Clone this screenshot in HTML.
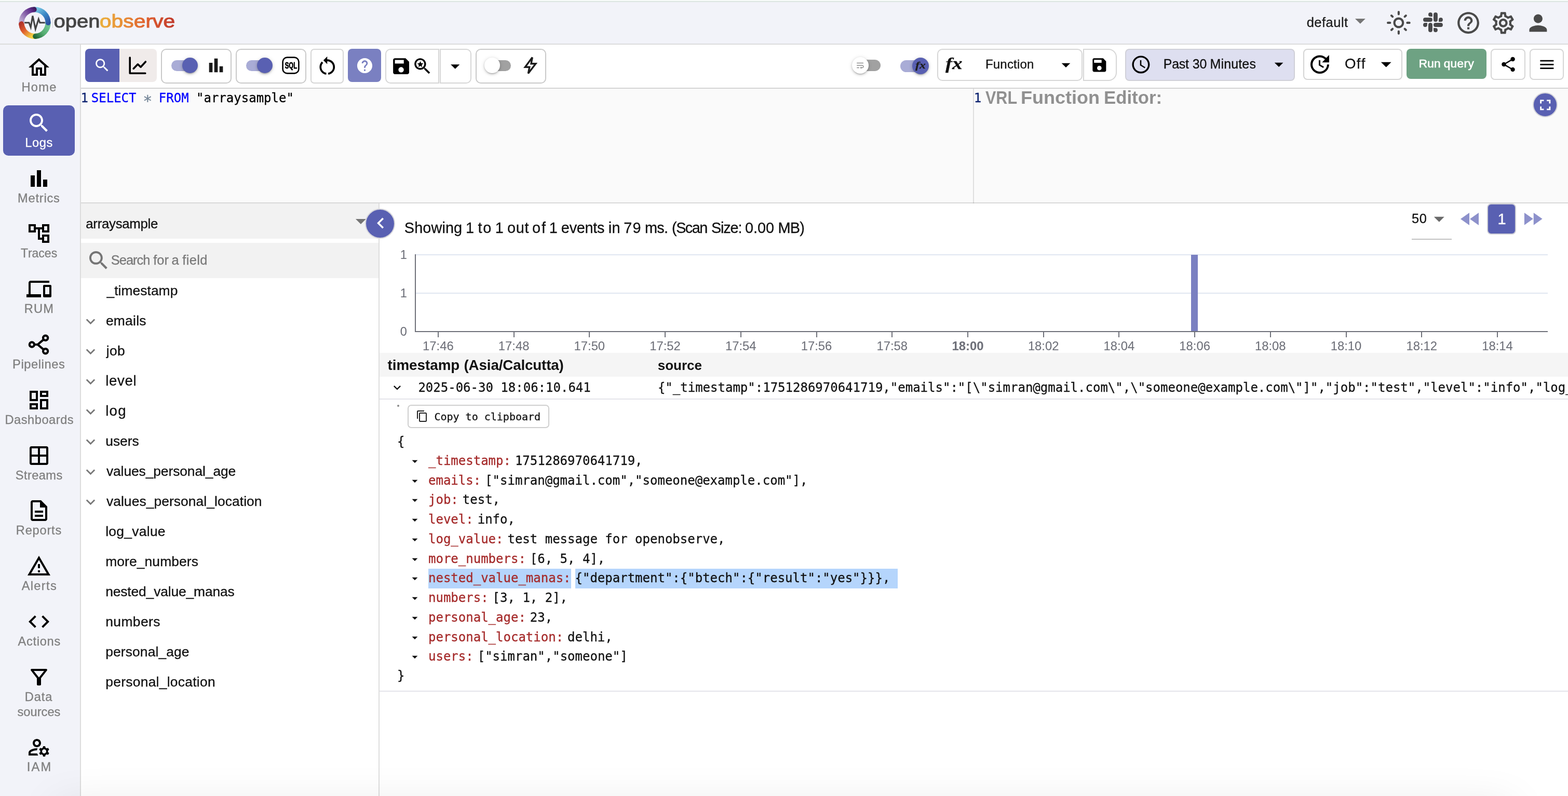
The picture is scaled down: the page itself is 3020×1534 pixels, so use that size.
<!DOCTYPE html>
<html lang="en"><head><meta charset="utf-8"><title>OpenObserve - Logs</title>
<style>
*{box-sizing:border-box;margin:0;padding:0}
html{overflow:hidden;background:#fff}
body{position:relative;width:3020px;height:1534px;overflow:hidden;background:#fff;font-family:"Liberation Sans",sans-serif;font-kerning:none;-webkit-font-smoothing:antialiased}
div,span,svg,header,nav,main,section,aside,button,ul,li{position:absolute;display:block}
button{border:0;background:none;font:inherit}
.t{white-space:pre;line-height:60px;height:60px;-webkit-text-stroke:.3px}
.sans{font-family:"Liberation Sans",sans-serif}
.sansb{font-family:"Liberation Sans",sans-serif;font-weight:bold;-webkit-text-stroke:0}
.mono{font-family:"DejaVu Sans Mono","Liberation Mono",monospace}
.serifbi{font-family:"Liberation Serif",serif;font-weight:bold;font-style:italic}
.i{overflow:visible}
.bd{border:2px solid #c9c9c9;border-radius:10px;background:#fff}
#app{left:0;top:0;width:3020px;height:1534px;overflow:hidden;transform-origin:0 0}
@supports (transform:scale(calc(100vw / 3020px))){body{width:100vw;height:calc(100vw * 1534 / 3020)}#app{transform:scale(calc(100vw / 3020px))}}
#app>*{will-change:transform}
</style></head>
<body>
<div id="app">
<header style="left:0;top:0;width:3020px;height:86px;background:#f2f3f9;border-bottom:2px solid #dcdcdc">
<div style="left:0px;top:0px;width:3020px;height:2px;background:#f8fcfa"></div>
<div style="left:0px;top:2px;width:3020px;height:2px;background:#dbe5e1"></div>
<svg class="i" style="left:33px;top:10px;width:68px;height:68px" viewBox="0 0 68 68">
<defs>
<linearGradient id="lgp" gradientUnits="userSpaceOnUse" x1="7" y1="31" x2="35" y2="8"><stop offset="0" stop-color="#bfafd5"/><stop offset=".45" stop-color="#8560a8"/><stop offset=".8" stop-color="#5f2d8a"/><stop offset="1" stop-color="#3d1a5c"/></linearGradient>
<linearGradient id="lgb" gradientUnits="userSpaceOnUse" x1="37" y1="9" x2="60" y2="36"><stop offset="0" stop-color="#74c4e2"/><stop offset=".5" stop-color="#3a86c4"/><stop offset="1" stop-color="#2a50a0"/></linearGradient>
<linearGradient id="lgg" gradientUnits="userSpaceOnUse" x1="58" y1="38" x2="34" y2="61"><stop offset="0" stop-color="#70c491"/><stop offset=".5" stop-color="#55ad72"/><stop offset="1" stop-color="#1f6537"/></linearGradient>
<linearGradient id="lgr" gradientUnits="userSpaceOnUse" x1="33" y1="61" x2="8" y2="35"><stop offset="0" stop-color="#f5d843"/><stop offset=".15" stop-color="#f0c840"/><stop offset=".6" stop-color="#e0602f"/><stop offset="1" stop-color="#b3352a"/></linearGradient>
</defs>
<g fill="none" stroke-width="10.2" stroke-linecap="round">
<path d="M37 59.6A25.8 25.8 0 0 1 8.3 36.2" stroke="url(#lgr)"/>
<path d="M59.5 33.4A25.8 25.8 0 0 1 35.2 59.9" stroke="url(#lgg)"/>
<path d="M34.5 8.3A25.8 25.8 0 0 1 59.6 33.6" stroke="url(#lgb)"/>
<path d="M8.3 33A25.8 25.8 0 0 1 32.6 8.3" stroke="url(#lgp)"/>
<path d="M12 47A25.8 25.8 0 0 1 8.3 36.2" stroke="url(#lgr)"/>
</g>
<path d="M14.1 33.8h8.8l3.3 8.8l3.7-22l5.4 25.3l6-19l2.5 6.9h9.9" fill="none" stroke="#424242" stroke-width="3.1" stroke-linejoin="miter"/>
</svg>

<div style="left:100.6px;top:34px;width:1.2px;height:20px;background:#d0d0d4"></div>
<svg class="i" style="left:100px;top:16px;width:244px;height:56px" viewBox="100 16 244 56"><defs><linearGradient id="lgt" gradientUnits="userSpaceOnUse" x1="193" y1="0" x2="336" y2="0"><stop offset="0" stop-color="#ebb03d"/><stop offset=".3" stop-color="#e88f35"/><stop offset=".62" stop-color="#df5f2e"/><stop offset="1" stop-color="#c0392b"/></linearGradient></defs><text x="103.42" y="53.1" font-family="Liberation Sans,sans-serif" font-size="35" textLength="88.98" lengthAdjust="spacingAndGlyphs" fill="#454545" stroke="#454545" stroke-width="1.0" stroke-linejoin="round">open</text><text x="191.88" y="53.1" font-family="Liberation Sans,sans-serif" font-size="35" textLength="145.33" lengthAdjust="spacingAndGlyphs" fill="url(#lgt)" stroke="url(#lgt)" stroke-width="1.0" stroke-linejoin="round">observe</text></svg>
<span class="t sans" style="left:2516.63px;top:13px;font-size:25.5px;color:#1c1c1c;letter-spacing:0.499px;">default</span>
<svg class="i" style="left:2596.02px;top:16.12px;width:47.76px;height:47.76px;" viewBox="0 0 24 24" preserveAspectRatio="none"><path fill="#757575" d="M7 10l5 5 5-5z"/></svg>
<svg class="i" style="left:2669.33px;top:19.33px;width:49.75px;height:49.75px;" viewBox="0 0 24 24" preserveAspectRatio="none"><path fill="#4a4a4a" d="M12 9c1.65 0 3 1.35 3 3s-1.35 3-3 3-3-1.35-3-3 1.35-3 3-3m0-2c-2.76 0-5 2.24-5 5s2.24 5 5 5 5-2.24 5-5-2.24-5-5-5zM2 13h2c.55 0 1-.45 1-1s-.45-1-1-1H2c-.55 0-1 .45-1 1s.45 1 1 1zm18 0h2c.55 0 1-.45 1-1s-.45-1-1-1h-2c-.55 0-1 .45-1 1s.45 1 1 1zM11 2v2c0 .55.45 1 1 1s1-.45 1-1V2c0-.55-.45-1-1-1s-1 .45-1 1zm0 18v2c0 .55.45 1 1 1s1-.45 1-1v-2c0-.55-.45-1-1-1s-1 .45-1 1zM5.99 4.58c-.39-.39-1.03-.39-1.41 0-.39.39-.39 1.03 0 1.41l1.06 1.06c.39.39 1.03.39 1.41 0s.39-1.03 0-1.41L5.99 4.58zm12.37 12.37c-.39-.39-1.03-.39-1.41 0-.39.39-.39 1.03 0 1.41l1.06 1.06c.39.39 1.03.39 1.41 0 .39-.39.39-1.03 0-1.41l-1.06-1.06zm1.06-10.96c.39-.39.39-1.03 0-1.41-.39-.39-1.03-.39-1.41 0l-1.06 1.06c-.39.39-.39 1.03 0 1.41s1.03.39 1.41 0l1.06-1.06zM7.05 18.36c.39-.39.39-1.03 0-1.41-.39-.39-1.03-.39-1.41 0l-1.06 1.06c-.39.39-.39 1.03 0 1.41s1.03.39 1.41 0l1.06-1.06z"/></svg>
<svg class="i" style="left:2741.1px;top:24px;width:38px;height:38px" viewBox="0 0 38 38"><g fill="#48484a"><path d="M13.95 0A3.95 3.95 0 1 0 13.95 7.9H17.9V3.95A3.95 3.95 0 0 0 13.95 0z"/><rect x="20" y="0" width="7.9" height="17.9" rx="3.95"/><rect x="0" y="10" width="17.9" height="7.9" rx="3.95"/><path d="M33.95 10A3.95 3.95 0 1 1 33.95 17.9H30V13.95A3.95 3.95 0 0 1 33.95 10z"/><path d="M3.95 27.9A3.95 3.95 0 1 1 3.95 20H7.9V23.95A3.95 3.95 0 0 1 3.95 27.9z"/><rect x="10" y="20" width="7.9" height="17.9" rx="3.95"/><rect x="20" y="20" width="17.9" height="7.9" rx="3.95"/><path d="M23.95 37.9A3.95 3.95 0 1 0 23.95 30H20V33.95A3.95 3.95 0 0 0 23.95 37.9z"/></g></svg>
<svg class="i" style="left:2802.85px;top:19.10px;width:50.10px;height:50.10px;" viewBox="0 0 24 24" preserveAspectRatio="none"><path fill="#4a4a4a" d="M11 18h2v-2h-2v2zm1-16C6.48 2 2 6.48 2 12s4.48 10 10 10 10-4.48 10-10S17.52 2 12 2zm0 18c-4.41 0-8-3.59-8-8s3.59-8 8-8 8 3.59 8 8-3.59 8-8 8zm0-14c-2.21 0-4 1.79-4 4h2c0-1.1.9-2 2-2s2 .9 2 2c0 2-3 1.75-3 5h2c0-2.25 3-2.5 3-5 0-2.21-1.79-4-4-4z"/></svg>
<svg class="i" style="left:2869.66px;top:18.75px;width:50.49px;height:50.49px;" viewBox="0 0 24 24" preserveAspectRatio="none"><path fill="#4a4a4a" d="M19.43 12.98c.04-.32.07-.64.07-.98 0-.34-.03-.66-.07-.98l2.11-1.65c.19-.15.24-.42.12-.64l-2-3.46c-.09-.16-.26-.25-.44-.25-.06 0-.12.01-.17.03l-2.49 1c-.52-.4-1.08-.73-1.69-.98l-.38-2.65C14.46 2.18 14.25 2 14 2h-4c-.25 0-.46.18-.49.42l-.38 2.65c-.61.25-1.17.59-1.69.98l-2.49-1c-.06-.02-.12-.03-.18-.03-.17 0-.34.09-.43.25l-2 3.46c-.13.22-.07.49.12.64l2.11 1.65c-.04.32-.07.65-.07.98 0 .33.03.66.07.98l-2.11 1.65c-.19.15-.24.42-.12.64l2 3.46c.09.16.26.25.44.25.06 0 .12-.01.17-.03l2.49-1c.52.4 1.08.73 1.69.98l.38 2.65c.03.24.24.42.49.42h4c.25 0 .46-.18.49-.42l.38-2.65c.61-.25 1.17-.59 1.69-.98l2.49 1c.06.02.12.03.18.03.17 0 .34-.09.43-.25l2-3.46c.12-.22.07-.49-.12-.64l-2.11-1.65zm-1.98-1.71c.04.31.05.52.05.73 0 .21-.02.43-.05.73l-.14 1.13.89.7 1.08.84-.7 1.21-1.27-.51-1.04-.42-.9.68c-.43.32-.84.56-1.25.73l-1.06.43-.16 1.13-.2 1.35h-1.4l-.19-1.35-.16-1.13-1.06-.43c-.43-.18-.83-.41-1.23-.71l-.91-.7-1.06.43-1.27.51-.7-1.21 1.08-.84.89-.7-.14-1.13c-.03-.31-.05-.54-.05-.74s.02-.43.05-.73l.14-1.13-.89-.7-1.08-.84.7-1.21 1.27.51 1.04.42.9-.68c.43-.32.84-.56 1.25-.73l1.06-.43.16-1.13.2-1.35h1.39l.19 1.35.16 1.13 1.06.43c.43.18.83.41 1.23.71l.91.7 1.06-.43 1.27-.51.7 1.21-1.07.85-.89.7.14 1.13zM12 8c-2.21 0-4 1.79-4 4s1.79 4 4 4 4-1.79 4-4-1.79-4-4-4zm0 6c-1.1 0-2-.9-2-2s.9-2 2-2 2 .9 2 2-.9 2-2 2z"/></svg>
<svg class="i" style="left:2937.17px;top:18.68px;width:50.85px;height:50.85px;" viewBox="0 0 24 24" preserveAspectRatio="none"><path fill="#4a4a4a" d="M12 12c2.21 0 4-1.79 4-4s-1.79-4-4-4-4 1.79-4 4 1.79 4 4 4zm0 2c-2.67 0-8 1.34-8 4v2h16v-2c0-2.66-5.33-4-8-4z"/></svg>
</header>
<nav style="left:0;top:86px;width:156px;height:1448px;background:#f2f3f9;border-right:2px solid #dcdcdc">
<svg class="i" style="left:51.00px;top:19.90px;width:48.00px;height:48.00px" viewBox="0 0 24 24"><path fill="#000" d="M12 5.69l5 4.5V18h-2v-6H9v6H7v-7.81l5-4.5M12 3L2 12h3v8h6v-6h2v6h6v-8h3L12 3z"/></svg>
<span class="t sans" style="left:41.46px;top:52px;font-size:23.64px;color:#7f7f7f;letter-spacing:1.277px;">Home</span>
<div style="left:6px;top:117px;width:138px;height:97px;background:#5960b2;border-radius:10px"></div>
<svg class="i" style="left:51.00px;top:126.70px;width:48.00px;height:48.00px" viewBox="0 0 24 24"><path fill="#fff" d="M15.5 14h-.79l-.28-.27C15.41 12.59 16 11.11 16 9.5 16 5.91 13.09 3 9.5 3S3 5.91 3 9.5 5.91 16 9.5 16c1.61 0 3.09-.59 4.23-1.57l.27.28v.79l5 4.99L20.49 19l-4.99-5zm-6 0C7.01 14 5 11.99 5 9.5S7.01 5 9.5 5 14 7.01 14 9.5 11.99 14 9.5 14z"/></svg>
<span class="t sans" style="left:48.16px;top:159px;font-size:23.64px;color:#fff;letter-spacing:0.677px;">Logs</span>
<svg class="i" style="left:51.00px;top:233.50px;width:48.00px;height:48.00px" viewBox="0 0 24 24"><path fill="#000" d="M4 9h4v11H4zm12 4h4v7h-4zm-6-9h4v16h-4z"/></svg>
<span class="t sans" style="left:34.06px;top:266px;font-size:23.64px;color:#7f7f7f;letter-spacing:0.770px;">Metrics</span>
<svg class="i" style="left:51.00px;top:340.30px;width:48.00px;height:48.00px" viewBox="0 0 24 24"><path fill="#000" d="M22 11V3h-7v3H9V3H2v8h7V8h2v10h4v3h7v-8h-7v3h-2V8h2v3h7zM7 9H4V5h3v4zm10 6h3v4h-3v-4zm0-10h3v4h-3V5z"/></svg>
<span class="t sans" style="left:39.88px;top:372px;font-size:22.99px;color:#7f7f7f;">Traces</span>
<svg class="i" style="left:51.00px;top:447.10px;width:48.00px;height:48.00px" viewBox="0 0 24 24"><path fill="#000" d="M4 6h18V4H4c-1.1 0-2 .9-2 2v11H0v3h14v-3H4V6zm19 2h-6c-.55 0-1 .45-1 1v10c0 .55.45 1 1 1h6c.55 0 1-.45 1-1V9c0-.55-.45-1-1-1zm-1 9h-4v-7h4v7z"/></svg>
<span class="t sans" style="left:46.76px;top:479px;font-size:23.64px;color:#7f7f7f;letter-spacing:1.171px;">RUM</span>
<svg class="i" style="left:51.00px;top:553.90px;width:48.00px;height:48.00px" viewBox="0 0 24 24"><g fill="none" stroke="#000" stroke-width="2.1"><circle cx="5.2" cy="12" r="2.3"/><circle cx="18.3" cy="5.6" r="2.3"/><circle cx="18.3" cy="18.4" r="2.3"/><path d="M7.5 12h3.3M16.5 7.2l-5.7 4.8 5.7 4.8" stroke-linejoin="miter"/></g></svg>
<span class="t sans" style="left:24.06px;top:586px;font-size:23.64px;color:#7f7f7f;letter-spacing:0.607px;">Pipelines</span>
<svg class="i" style="left:51.00px;top:660.70px;width:48.00px;height:48.00px" viewBox="0 0 24 24"><path fill="#000" d="M19 5v2h-4V5h4M9 5v6H5V5h4m10 8v6h-4v-6h4M9 17v2H5v-2h4M21 3h-8v6h8V3zM11 3H3v10h8V3zm10 8h-8v10h8V11zm-10 4H3v6h8v-6z"/></svg>
<span class="t sans" style="left:9.46px;top:693px;font-size:23.64px;color:#7f7f7f;letter-spacing:0.536px;">Dashboards</span>
<svg class="i" style="left:51.00px;top:767.50px;width:48.00px;height:48.00px" viewBox="0 0 24 24"><path fill="#000" d="M5 3h14a2 2 0 0 1 2 2v14a2 2 0 0 1-2 2H5a2 2 0 0 1-2-2V5a2 2 0 0 1 2-2zM11 19v-6H5v6h6zM11 11V5H5v6h6zM19 19v-6h-6v6h6zM19 11V5h-6v6h6z"/></svg>
<span class="t sans" style="left:29.73px;top:800px;font-size:23.64px;color:#7f7f7f;letter-spacing:0.419px;">Streams</span>
<svg class="i" style="left:51.00px;top:874.30px;width:48.00px;height:48.00px" viewBox="0 0 24 24"><path fill="#000" d="M8 16h8v2H8zm0-4h8v2H8zm6-10H6c-1.1 0-2 .9-2 2v16c0 1.1.89 2 1.99 2H18c1.1 0 2-.9 2-2V8l-6-6zm4 18H6V4h7v5h5v11z"/></svg>
<span class="t sans" style="left:30.86px;top:906px;font-size:23.64px;color:#7f7f7f;letter-spacing:0.770px;">Reports</span>
<svg class="i" style="left:51.00px;top:981.10px;width:48.00px;height:48.00px" viewBox="0 0 24 24"><path fill="#000" d="M12 5.99L19.53 19H4.47L12 5.99M12 2L1 21h22L12 2zm1 14h-2v2h2v-2zm0-6h-2v4h2v-4z"/></svg>
<span class="t sans" style="left:41.65px;top:1013px;font-size:23.64px;color:#7f7f7f;letter-spacing:1.355px;">Alerts</span>
<svg class="i" style="left:51.00px;top:1087.90px;width:48.00px;height:48.00px" viewBox="0 0 24 24"><path fill="#000" d="M9.4 16.6L4.8 12l4.6-4.6L8 6l-6 6 6 6 1.4-1.4zm5.2 0l4.6-4.6-4.6-4.6L16 6l6 6-6 6-1.4-1.4z"/></svg>
<span class="t sans" style="left:34.55px;top:1120px;font-size:23.64px;color:#7f7f7f;letter-spacing:0.696px;">Actions</span>
<svg class="i" style="left:51.00px;top:1194.70px;width:48.00px;height:48.00px" viewBox="0 0 24 24"><path fill="#000" d="M7 6h10l-5.01 6.3L7 6zm-2.75-.39C6.27 8.2 10 13 10 13v6c0 .55.45 1 1 1h2c.55 0 1-.45 1-1v-6s3.72-4.8 5.74-7.39c.51-.66.04-1.61-.79-1.61H5.04c-.83 0-1.3.95-.79 1.61z"/></svg>
<span class="t sans" style="left:47.86px;top:1227px;font-size:23.64px;color:#7f7f7f;letter-spacing:0.901px;">Data</span>
<span class="t sans" style="left:33.44px;top:1256px;font-size:23.64px;color:#7f7f7f;letter-spacing:0.040px;">sources</span>
<svg class="i" style="left:51.00px;top:1330.10px;width:48.00px;height:48.00px" viewBox="0 0 24 24"><path fill="#000" d="M4 18v-.65c0-.34.16-.66.41-.81C6.1 15.53 8.03 15 10 15c.03 0 .05 0 .08.01.1-.7.3-1.37.59-1.98-.22-.02-.44-.03-.67-.03-2.42 0-4.68.67-6.61 1.82-.88.52-1.39 1.5-1.39 2.53V20h9.26c-.42-.6-.75-1.28-.97-2H4zM10 12c2.21 0 4-1.79 4-4s-1.79-4-4-4-4 1.79-4 4 1.79 4 4 4zm0-6c1.1 0 2 .9 2 2s-.9 2-2 2-2-.9-2-2 .9-2 2-2zM20.75 16c0-.22-.03-.42-.06-.63l1.14-1.01-1-1.73-1.45.49c-.32-.27-.68-.48-1.08-.63L18 11h-2l-.3 1.49c-.4.15-.76.36-1.08.63l-1.45-.49-1 1.73 1.14 1.01c-.03.21-.06.41-.06.63s.03.42.06.63l-1.14 1.01 1 1.73 1.45-.49c.32.27.68.48 1.08.63L16 21h2l.3-1.49c.4-.15.76-.36 1.08-.63l1.45.49 1-1.73-1.14-1.01c.03-.21.06-.41.06-.63zM17 18c-1.1 0-2-.9-2-2s.9-2 2-2 2 .9 2 2-.9 2-2 2z"/></svg>
<span class="t sans" style="left:51.82px;top:1362px;font-size:23.64px;color:#7f7f7f;letter-spacing:2.196px;">IAM</span>
</nav>
<section style="left:156px;top:86px;width:2864px;height:85px;background:#fff;border-bottom:2px solid #d4d4d4">
<div style="left:8px;top:8px;width:66px;height:64px;background:#5960b2;border-radius:8px 0 0 8px"></div>
<svg class="i" style="left:24.37px;top:23.22px;width:33.28px;height:33.28px;" viewBox="0 0 24 24" preserveAspectRatio="none"><path fill="#fff" d="M15.5 14h-.79l-.28-.27C15.41 12.59 16 11.11 16 9.5 16 5.91 13.09 3 9.5 3S3 5.91 3 9.5 5.91 16 9.5 16c1.61 0 3.09-.59 4.23-1.57l.27.28v.79l5 4.99L20.49 19l-4.99-5zm-6 0C7.01 14 5 11.99 5 9.5S7.01 5 9.5 5 14 7.01 14 9.5 11.99 14 9.5 14z"/></svg>
<div style="left:74px;top:8px;width:72px;height:64px;background:#f0ebea;border-radius:0 8px 8px 0"></div>
<svg class="i" style="left:90px;top:20px;width:40px;height:40px" viewBox="0 0 40 40"><g fill="none" stroke="#000" stroke-width="3.6" stroke-linecap="round" stroke-linejoin="round"><path d="M4.2 5v30.3h29.6"/><path d="M11.2 26.2l8.2-8.4 5.6 5.4 9.4-10.2"/></g></svg>
<div class="bd" style="left:154px;top:8px;width:136px;height:67px;"></div>
<div style="left:174px;top:29.7px;width:48px;height:21px;background:#a9acd6;border-radius:10.5px"></div><div style="left:194.6px;top:25px;width:30.4px;height:30.4px;background:#5960b2;border-radius:50%;box-shadow:0 3px 2px -2px rgba(0,0,0,.2),0 2px 4px rgba(0,0,0,.18),0 1px 8px rgba(0,0,0,.12)"></div>
<svg class="i" style="left:239.87px;top:19.68px;width:40.05px;height:40.05px;" viewBox="0 0 24 24" preserveAspectRatio="none"><path fill="#1a1a1a" d="M4 9h4v11H4zm12 4h4v7h-4zm-6-9h4v16h-4z"/></svg>
<div class="bd" style="left:298px;top:8px;width:136px;height:67px;"></div>
<div style="left:318px;top:29.7px;width:48px;height:21px;background:#a9acd6;border-radius:10.5px"></div><div style="left:338.8px;top:25px;width:30.4px;height:30.4px;background:#5960b2;border-radius:50%;box-shadow:0 3px 2px -2px rgba(0,0,0,.2),0 2px 4px rgba(0,0,0,.18),0 1px 8px rgba(0,0,0,.12)"></div>
<svg class="i" style="left:385.5px;top:21.5px;width:36px;height:36px" viewBox="0 0 36 36"><rect x="2.6" y="2.6" width="30.8" height="30.8" rx="8.5" fill="none" stroke="#000" stroke-width="2.6"/><text x="6.7" y="24.2" style="font-family:'Liberation Sans',sans-serif;font-weight:700;font-size:16.2px;stroke:#000;stroke-width:.8px;stroke-linejoin:round" textLength="23.4" lengthAdjust="spacingAndGlyphs">SQL</text></svg>
<div class="bd" style="left:442px;top:8px;width:64px;height:67px;border-color:#d6d6d6;border-radius:7px"></div>
<svg class="i" style="left:451.72px;top:18.81px;width:44.56px;height:44.56px;" viewBox="0 0 24 24" preserveAspectRatio="none"><path fill="#000" d="M12 5V2L8 6l4 4V7c3.31 0 6 2.69 6 6 0 2.97-2.17 5.43-5 5.91v2.02c3.95-.49 7-3.85 7-7.93 0-4.42-3.58-8-8-8zm-6 8c0-1.65.67-3.15 1.76-4.24L6.34 7.34C4.9 8.79 4 10.79 4 13c0 4.08 3.05 7.44 7 7.93v-2.02c-2.83-.48-5-2.94-5-5.91z"/></svg>
<div style="left:514px;top:8px;width:64px;height:64px;background:#7a80c1;border-radius:8px"></div>
<svg class="i" style="left:528.66px;top:22.51px;width:34.98px;height:34.98px;" viewBox="0 0 24 24" preserveAspectRatio="none"><path fill="#fff" d="M12 2C6.48 2 2 6.48 2 12s4.48 10 10 10 10-4.48 10-10S17.52 2 12 2zm1 17h-2v-2h2v2zm2.07-7.75l-.9.92C13.45 12.9 13 13.5 13 15h-2v-.5c0-1.1.45-2.1 1.17-2.83l1.24-1.26c.37-.36.59-.86.59-1.41 0-1.1-.9-2-2-2s-2 .9-2 2H8c0-2.21 1.79-4 4-4s4 1.79 4 4c0 .88-.36 1.68-.93 2.25z"/></svg>
<div class="bd" style="left:586px;top:8px;width:103.5px;height:67px;border-color:#d6d6d6;border-radius:10px 0 0 10px"></div>
<div class="bd" style="left:690.5px;top:8px;width:61.5px;height:67px;border-color:#d6d6d6;border-radius:0 10px 10px 0"></div>
<svg class="i" style="left:595.93px;top:20.78px;width:41.13px;height:41.13px;" viewBox="0 0 24 24" preserveAspectRatio="none"><path fill="#000" d="M17 3H5c-1.11 0-2 .9-2 2v14c0 1.1.89 2 2 2h14c1.1 0 2-.9 2-2V7l-4-4zm-5 16c-1.66 0-3-1.34-3-3s1.34-3 3-3 3 1.34 3 3-1.34 3-3 3zm3-10H5V5h10v4z"/></svg>
<svg class="i" style="left:637.05px;top:20.60px;width:41.37px;height:41.37px;" viewBox="0 0 24 24" preserveAspectRatio="none"><path fill="#000" d="M15.5 14h-.79l-.28-.27C15.41 12.59 16 11.11 16 9.5 16 5.91 13.09 3 9.5 3S3 5.91 3 9.5 5.91 16 9.5 16c1.61 0 3.09-.59 4.23-1.57l.27.28v.79l5 4.99L20.49 19l-4.99-5zm-6 0C7.01 14 5 11.99 5 9.5S7.01 5 9.5 5 14 7.01 14 9.5 11.99 14 9.5 14z"/></svg>
<svg class="i" style="left:647.2px;top:31px;width:13px;height:13px" viewBox="0 0 24 24"><path d="M12 1.5l3.1 7.3 7.9.7-6 5.2 1.8 7.7-6.8-4.1-6.8 4.1 1.8-7.7-6-5.2 7.9-.7z"/></svg>
<svg class="i" style="left:700.35px;top:20.74px;width:41.40px;height:41.40px;" viewBox="0 0 24 24" preserveAspectRatio="none"><path fill="#000" d="M7 10l5 5 5-5z"/></svg>
<div class="bd" style="left:760px;top:8px;width:136px;height:67px;"></div>
<div style="left:782px;top:29.7px;width:46px;height:21px;background:#a1a1a1;border-radius:10.5px"></div><div style="left:777px;top:25.3px;width:29.8px;height:29.8px;background:#fff;border-radius:50%;box-shadow:0 3px 2px -2px rgba(0,0,0,.2),0 2px 4px rgba(0,0,0,.18),0 1px 8px rgba(0,0,0,.12)"></div>
<svg class="i" style="left:846.3px;top:20px;width:40px;height:40px" viewBox="0 0 40 40"><path d="M23.3 4.6L9.4 23.3h8.4l-2.4 12.2 14.4-18.8h-8.8z" fill="none" stroke="#1c1c1c" stroke-width="3.4" stroke-linejoin="miter"/></svg>
<div style="left:1494px;top:29px;width:46px;height:22px;background:#a1a1a1;border-radius:11.0px"></div><div style="left:1484.65px;top:23.8px;width:32.4px;height:32.4px;background:#fff;border-radius:50%;box-shadow:0 3px 2px -2px rgba(0,0,0,.2),0 2px 4px rgba(0,0,0,.18),0 1px 8px rgba(0,0,0,.12)"></div>
<svg class="i" style="left:1491.32px;top:30.75px;width:19.06px;height:18.00px;" viewBox="0 0 24 24" preserveAspectRatio="none"><path fill="#8a8a8a" d="M4 19h6v-2H4v2zM20 5H4v2h16V5zm-3 6H4v2h13.25c1.1 0 2 .9 2 2s-.9 2-2 2H15v-2l-3 3 3 3v-2h2c2.21 0 4-1.79 4-4s-1.79-4-4-4z"/></svg>
<div style="left:1577.8px;top:29.6px;width:48.2px;height:23px;background:#a9acd6;border-radius:11.5px"></div><div style="left:1600.8px;top:25px;width:32.2px;height:32.2px;background:#5960b2;border-radius:50%;box-shadow:0 3px 2px -2px rgba(0,0,0,.2),0 2px 4px rgba(0,0,0,.18),0 1px 8px rgba(0,0,0,.12)"></div>
<span class="t serifbi" style="left:1607.30px;top:10px;font-size:18.1px;color:#1d1d1d;transform:scaleX(1.3119);transform-origin:0 0;">fx</span>
<div class="bd" style="left:1649px;top:8px;width:280px;height:62px;border-color:#d6d6d6;border-radius:10px"></div>
<div class="bd" style="left:1930px;top:8px;width:65px;height:62px;border-color:#d6d6d6;border-radius:0 16px 16px 0"></div>
<span class="t serifbi" style="left:1665.00px;top:7px;font-size:31.5px;color:#111;transform:scaleX(1.2446);transform-origin:0 0;">fx</span>
<span class="t sans" style="left:1742.03px;top:8px;font-size:24px;color:#111;letter-spacing:0.168px;">Function</span>
<svg class="i" style="left:1877.37px;top:18.54px;width:39.96px;height:39.96px;" viewBox="0 0 24 24" preserveAspectRatio="none"><path fill="#000" d="M7 10l5 5 5-5z"/></svg>
<svg class="i" style="left:1944.43px;top:21.88px;width:34.73px;height:34.73px;" viewBox="0 0 24 24" preserveAspectRatio="none"><path fill="#000" d="M17 3H5c-1.11 0-2 .9-2 2v14c0 1.1.89 2 2 2h14c1.1 0 2-.9 2-2V7l-4-4zm-5 16c-1.66 0-3-1.34-3-3s1.34-3 3-3 3 1.34 3 3-1.34 3-3 3zm3-10H5V5h10v4z"/></svg>
<div style="left:2011px;top:8px;width:327px;height:62px;background:#dedff0;border:2px solid #d0d0d8;border-radius:8px"></div>
<svg class="i" style="left:2020.67px;top:17.72px;width:40.86px;height:40.86px;" viewBox="0 0 24 24" preserveAspectRatio="none"><path fill="#000" d="M11.99 2C6.47 2 2 6.48 2 12s4.47 10 9.99 10C17.52 22 22 17.52 22 12S17.52 2 11.99 2zM12 20c-4.42 0-8-3.58-8-8s3.58-8 8-8 8 3.58 8 8-3.58 8-8 8zm.5-13H11v6l5.25 3.15.75-1.23-4.5-2.67z"/></svg>
<span class="t sans" style="left:2084.86px;top:7px;font-size:24.92px;color:#111;letter-spacing:-0.246px;">Past </span><span class="t sans" style="left:2140.65px;top:7px;font-size:24.92px;color:#111;">30 </span><span class="t sans" style="left:2174.46px;top:7px;font-size:24.92px;color:#111;letter-spacing:0.198px;">Minutes</span>
<svg class="i" style="left:2287.05px;top:18.36px;width:40.20px;height:40.20px;" viewBox="0 0 24 24" preserveAspectRatio="none"><path fill="#000" d="M7 10l5 5 5-5z"/></svg>
<div class="bd" style="left:2354px;top:8px;width:191px;height:60px;border-color:#d4d4d4;border-radius:8px"></div>
<svg class="i" style="left:2362.18px;top:14.03px;width:47.93px;height:47.93px;" viewBox="0 0 24 24" preserveAspectRatio="none"><path fill="#000" d="M21 10.12h-6.78l2.74-2.82c-2.73-2.7-7.15-2.8-9.88-.1-2.73 2.71-2.73 7.08 0 9.79s7.15 2.71 9.88 0C18.32 15.65 19 14.08 19 12.1h2c0 1.98-.88 4.55-2.64 6.29-3.51 3.48-9.21 3.48-12.72 0-3.5-3.47-3.53-9.11-.02-12.58s9.14-3.47 12.65 0L21 3v7.12zM12.5 8v4.25l3.5 2.08-.72 1.21L11 13V8h1.5z"/></svg>
<span class="t sans" style="left:2433.89px;top:7px;font-size:27.6px;color:#111;letter-spacing:1.381px;">Off</span>
<svg class="i" style="left:2489.85px;top:14.16px;width:47.40px;height:47.40px;" viewBox="0 0 24 24" preserveAspectRatio="none"><path fill="#000" d="M7 10l5 5 5-5z"/></svg>
<div style="left:2553px;top:8px;width:154px;height:58px;background:#6ea283;border-radius:8px"></div>
<span class="t sans" style="left:2576.75px;top:7px;font-size:22.6px;color:#fff;letter-spacing:0.231px;-webkit-text-stroke:0.65px #fff;">Run </span><span class="t sans" style="left:2624.65px;top:7px;font-size:22.6px;color:#fff;letter-spacing:0.415px;-webkit-text-stroke:0.65px #fff;">query</span>
<div class="bd" style="left:2715px;top:8px;width:67px;height:60px;border-color:#d6d6d6;border-radius:8px"></div>
<svg class="i" style="left:2731.79px;top:20.90px;width:34.12px;height:34.12px;" viewBox="0 0 24 24" preserveAspectRatio="none"><path fill="#000" d="M18 16.08c-.76 0-1.44.3-1.96.77L8.91 12.7c.05-.23.09-.46.09-.7s-.04-.47-.09-.7l7.05-4.11c.54.5 1.25.81 2.04.81 1.66 0 3-1.34 3-3s-1.34-3-3-3-3 1.34-3 3c0 .24.04.47.09.7L8.04 9.81C7.5 9.31 6.79 9 6 9c-1.66 0-3 1.34-3 3s1.34 3 3 3c.79 0 1.5-.31 2.04-.81l7.12 4.16c-.05.21-.08.43-.08.65 0 1.61 1.31 2.92 2.92 2.92s2.92-1.31 2.92-2.92-1.31-2.92-2.92-2.92z"/></svg>
<div class="bd" style="left:2790px;top:8px;width:66px;height:60px;border-color:#d6d6d6;border-radius:8px"></div>
<svg class="i" style="left:2805.63px;top:20.53px;width:34.73px;height:34.73px;" viewBox="0 0 24 24" preserveAspectRatio="none"><path fill="#000" d="M3 18h18v-2H3v2zm0-5h18v-2H3v2zm0-7v2h18V6H3z"/></svg>
</section>
<section style="left:156px;top:171px;width:2864px;height:221px;background:#fafafa;border-bottom:2px solid #d9d9d9">
<span class="t mono" style="left:-0.48px;top:-12px;font-size:24px;color:#0b216f;">1</span>
<span class="t mono" style="left:19.80px;top:-12px;font-size:24px;color:#0000ff;">SELECT</span>
<span class="t mono" style="left:119.37px;top:-6px;font-size:30px;color:#778899;">*</span>
<span class="t mono" style="left:149.83px;top:-12px;font-size:24px;color:#0000ff;">FROM</span>
<span class="t mono" style="left:222.07px;top:-12px;font-size:24px;color:#000;">"arraysample"</span>
<div style="left:1718px;top:0px;width:2px;height:222px;background:rgba(0,0,0,.105);z-index:2"></div>
<span class="t mono" style="left:1719.72px;top:-12px;font-size:24px;color:#0b216f;">1</span>
<span class="t sansb" style="left:1741.79px;top:-13px;font-size:34.5px;color:#909090;transform:scaleX(0.8847);transform-origin:0 0;">VRL </span><span class="t sansb" style="left:1810.49px;top:-13px;font-size:34.5px;color:#909090;transform:scaleX(1.0447);transform-origin:0 0;">Function </span><span class="t sansb" style="left:1969.57px;top:-13px;font-size:34.5px;color:#909090;transform:scaleX(1.0083);transform-origin:0 0;">Editor:</span>
<div style="left:2796px;top:7px;width:48px;height:48px;background:#5960b2;border-radius:50%;border:2px solid #d3d3da"></div>
<svg class="i" style="left:2802.88px;top:13.73px;width:34.54px;height:34.54px;" viewBox="0 0 24 24" preserveAspectRatio="none"><path fill="#fff" d="M7 14H5v5h5v-2H7v-3zm-2-4h2V7h3V5H5v5zm12 7h-3v2h5v-5h-2v3zM14 5v2h3v3h2V5h-5z"/></svg>
</section>
<aside style="left:156px;top:392px;width:573px;height:1142px;background:#fff">
<div style="left:0px;top:0px;width:573px;height:68px;background:#f2f2f2"></div>
<span class="t sans" style="left:9.31px;top:9px;font-size:25.76px;color:#111;letter-spacing:-0.259px;">arraysample</span>
<svg class="i" style="left:514.71px;top:9.76px;width:47.88px;height:47.88px;" viewBox="0 0 24 24" preserveAspectRatio="none"><path fill="#757575" d="M7 10l5 5 5-5z"/></svg>
<div style="left:0px;top:76px;width:573px;height:68px;background:#f2f2f2"></div>
<svg class="i" style="left:10.03px;top:86.03px;width:47.75px;height:47.75px;" viewBox="0 0 24 24" preserveAspectRatio="none"><path fill="#757575" d="M15.5 14h-.79l-.28-.27C15.41 12.59 16 11.11 16 9.5 16 5.91 13.09 3 9.5 3S3 5.91 3 9.5 5.91 16 9.5 16c1.61 0 3.09-.59 4.23-1.57l.27.28v.79l5 4.99L20.49 19l-4.99-5zm-6 0C7.01 14 5 11.99 5 9.5S7.01 5 9.5 5 14 7.01 14 9.5 11.99 14 9.5 14z"/></svg>
<span class="t sans" style="left:57.85px;top:79px;font-size:25.43px;color:#7a7a7a;letter-spacing:-1.014px;">Search </span><span class="t sans" style="left:139.24px;top:79px;font-size:25.43px;color:#7a7a7a;">for </span><span class="t sans" style="left:174.49px;top:79px;font-size:25.43px;color:#7a7a7a;">a </span><span class="t sans" style="left:195.34px;top:79px;font-size:25.43px;color:#7a7a7a;letter-spacing:0.387px;">field</span>
<span class="t sans" style="left:49.40px;top:138px;font-size:26.4px;color:#111;letter-spacing:0.062px;">_timestamp</span>
<span class="t sans" style="left:47.88px;top:196px;font-size:26.4px;color:#111;letter-spacing:0.278px;">emails</span>
<svg class="i" style="left:0.67px;top:209.54px;width:34.95px;height:34.95px;" viewBox="0 0 24 24" preserveAspectRatio="none"><path fill="#777" d="M16.59 8.59L12 13.17 7.41 8.59 6 10l6 6 6-6z"/></svg>
<span class="t sans" style="left:48.84px;top:254px;font-size:26.4px;color:#111;letter-spacing:0.267px;">job</span>
<svg class="i" style="left:0.67px;top:267.54px;width:34.95px;height:34.95px;" viewBox="0 0 24 24" preserveAspectRatio="none"><path fill="#777" d="M16.59 8.59L12 13.17 7.41 8.59 6 10l6 6 6-6z"/></svg>
<span class="t sans" style="left:47.14px;top:312px;font-size:27.6px;color:#111;letter-spacing:0.661px;">level</span>
<svg class="i" style="left:0.67px;top:325.54px;width:34.95px;height:34.95px;" viewBox="0 0 24 24" preserveAspectRatio="none"><path fill="#777" d="M16.59 8.59L12 13.17 7.41 8.59 6 10l6 6 6-6z"/></svg>
<span class="t sans" style="left:47.14px;top:370px;font-size:27.6px;color:#111;letter-spacing:1.354px;">log</span>
<svg class="i" style="left:0.67px;top:383.54px;width:34.95px;height:34.95px;" viewBox="0 0 24 24" preserveAspectRatio="none"><path fill="#777" d="M16.59 8.59L12 13.17 7.41 8.59 6 10l6 6 6-6z"/></svg>
<span class="t sans" style="left:47.29px;top:428px;font-size:26.4px;color:#111;letter-spacing:-0.047px;">users</span>
<svg class="i" style="left:0.67px;top:441.54px;width:34.95px;height:34.95px;" viewBox="0 0 24 24" preserveAspectRatio="none"><path fill="#777" d="M16.59 8.59L12 13.17 7.41 8.59 6 10l6 6 6-6z"/></svg>
<span class="t sans" style="left:48.91px;top:486px;font-size:26.4px;color:#111;letter-spacing:-0.085px;">values_personal_age</span>
<svg class="i" style="left:0.67px;top:499.54px;width:34.95px;height:34.95px;" viewBox="0 0 24 24" preserveAspectRatio="none"><path fill="#777" d="M16.59 8.59L12 13.17 7.41 8.59 6 10l6 6 6-6z"/></svg>
<span class="t sans" style="left:48.91px;top:544px;font-size:26.4px;color:#111;letter-spacing:0.077px;">values_personal_location</span>
<svg class="i" style="left:0.67px;top:557.54px;width:34.95px;height:34.95px;" viewBox="0 0 24 24" preserveAspectRatio="none"><path fill="#777" d="M16.59 8.59L12 13.17 7.41 8.59 6 10l6 6 6-6z"/></svg>
<span class="t sans" style="left:47.22px;top:602px;font-size:26.4px;color:#111;letter-spacing:0.291px;">log_value</span>
<span class="t sans" style="left:47.25px;top:660px;font-size:26.4px;color:#111;letter-spacing:0.106px;">more_numbers</span>
<span class="t sans" style="left:47.25px;top:718px;font-size:26.4px;color:#111;letter-spacing:-0.145px;">nested_value_manas</span>
<span class="t sans" style="left:47.25px;top:776px;font-size:26.4px;color:#111;letter-spacing:0.416px;">numbers</span>
<span class="t sans" style="left:47.30px;top:834px;font-size:26.4px;color:#111;letter-spacing:0.107px;">personal_age</span>
<span class="t sans" style="left:47.30px;top:892px;font-size:26.4px;color:#111;letter-spacing:0.279px;">personal_location</span>
</aside>
<div style="left:729px;top:392px;width:2px;height:1142px;background:#dedede"></div>
<main style="left:731px;top:392px;width:2289px;height:1142px;background:#fff">
<span class="t sans" style="left:47.79px;top:17px;font-size:28.84px;color:#111;letter-spacing:0.123px;">Showing </span><span class="t sans" style="left:166.09px;top:17px;font-size:28.84px;color:#111;">1 </span><span class="t sans" style="left:189.46px;top:17px;font-size:28.84px;color:#111;letter-spacing:1.895px;">to </span><span class="t sans" style="left:222.74px;top:17px;font-size:28.84px;color:#111;">1 </span><span class="t sans" style="left:245.89px;top:17px;font-size:28.84px;color:#111;letter-spacing:0.815px;">out </span><span class="t sans" style="left:293.99px;top:17px;font-size:28.84px;color:#111;letter-spacing:1.917px;">of </span><span class="t sans" style="left:326.79px;top:17px;font-size:28.84px;color:#111;">1 </span><span class="t sans" style="left:349.87px;top:17px;font-size:28.84px;color:#111;letter-spacing:-0.261px;">events </span><span class="t sans" style="left:440.77px;top:17px;font-size:28.84px;color:#111;letter-spacing:0.255px;">in </span><span class="t sans" style="left:470.22px;top:17px;font-size:28.84px;color:#111;letter-spacing:1.366px;">79 </span><span class="t sans" style="left:510.98px;top:17px;font-size:28.84px;color:#111;letter-spacing:-0.654px;">ms. </span><span class="t sans" style="left:563.11px;top:17px;font-size:28.84px;color:#111;letter-spacing:-1.544px;">(Scan </span><span class="t sans" style="left:638.89px;top:17px;font-size:28.84px;color:#111;letter-spacing:-1.143px;">Size: </span><span class="t sans" style="left:703.97px;top:17px;font-size:28.84px;color:#111;letter-spacing:0.007px;">0.00 </span><span class="t sans" style="left:767.43px;top:17px;font-size:28.84px;color:#111;letter-spacing:-0.655px;">MB)</span>
<span class="t sans" style="left:1987.98px;top:-1px;font-size:25.4px;color:#111;letter-spacing:0.757px;">50</span>
<svg class="i" style="left:2017.03px;top:6.09px;width:47.64px;height:47.64px;" viewBox="0 0 24 24" preserveAspectRatio="none"><path fill="#6a6a6a" d="M7 10l5 5 5-5z"/></svg>
<div style="left:1988px;top:68px;width:77px;height:2px;background:#c2c2c2"></div>
<svg class="i" style="left:2077.29px;top:5.79px;width:48.01px;height:48.01px;" viewBox="0 0 24 24" preserveAspectRatio="none"><path fill="#8d91cb" d="M11 18V6l-8.5 6 8.5 6zm.5-6l8.5 6V6l-8.5 6z"/></svg>
<div style="left:2133px;top:0px;width:56px;height:60px;background:#5960b2;border:2px solid #cfcfd6;border-radius:8px"></div>
<span class="t sans" style="left:2153.39px;top:0px;font-size:29px;color:#fff;">1</span>
<svg class="i" style="left:2196.90px;top:6.03px;width:47.53px;height:47.53px;" viewBox="0 0 24 24" preserveAspectRatio="none"><path fill="#8d91cb" d="M4 18l8.5-6L4 6v12zm9-12v12l8.5-6L13 6z"/></svg>
<div style="left:70px;top:98px;width:2180px;height:2px;background:#e0e6f1"></div>
<div style="left:70px;top:172px;width:2180px;height:2px;background:#e0e6f1"></div>
<div style="left:1563px;top:98.5px;width:13.4px;height:147.5px;background:#7a80c1"></div>
<div style="left:68px;top:97.5px;width:2px;height:150.5px;background:#6e7079"></div>
<div style="left:68px;top:246px;width:2182px;height:2px;background:#6e7079"></div>
<div style="left:111.9px;top:248px;width:2px;height:9.5px;background:#6e7079"></div>
<span class="t sans" style="left:83.12px;top:245px;font-size:23.8px;color:#6e7079;-webkit-text-stroke:.1px;">17:46</span>
<div style="left:257.62px;top:248px;width:2px;height:9.5px;background:#6e7079"></div>
<span class="t sans" style="left:228.84px;top:245px;font-size:23.8px;color:#6e7079;-webkit-text-stroke:.1px;">17:48</span>
<div style="left:403.34px;top:248px;width:2px;height:9.5px;background:#6e7079"></div>
<span class="t sans" style="left:374.56px;top:245px;font-size:23.8px;color:#6e7079;-webkit-text-stroke:.1px;">17:50</span>
<div style="left:549.06px;top:248px;width:2px;height:9.5px;background:#6e7079"></div>
<span class="t sans" style="left:520.28px;top:245px;font-size:23.8px;color:#6e7079;-webkit-text-stroke:.1px;">17:52</span>
<div style="left:694.78px;top:248px;width:2px;height:9.5px;background:#6e7079"></div>
<span class="t sans" style="left:666.00px;top:245px;font-size:23.8px;color:#6e7079;-webkit-text-stroke:.1px;">17:54</span>
<div style="left:840.5px;top:248px;width:2px;height:9.5px;background:#6e7079"></div>
<span class="t sans" style="left:811.72px;top:245px;font-size:23.8px;color:#6e7079;-webkit-text-stroke:.1px;">17:56</span>
<div style="left:986.22px;top:248px;width:2px;height:9.5px;background:#6e7079"></div>
<span class="t sans" style="left:957.44px;top:245px;font-size:23.8px;color:#6e7079;-webkit-text-stroke:.1px;">17:58</span>
<div style="left:1131.94px;top:248px;width:2px;height:9.5px;background:#6e7079"></div>
<span class="t sansb" style="left:1102.50px;top:245px;font-size:23.8px;color:#6e7079;-webkit-text-stroke:.1px;">18:00</span>
<div style="left:1277.66px;top:248px;width:2px;height:9.5px;background:#6e7079"></div>
<span class="t sans" style="left:1248.88px;top:245px;font-size:23.8px;color:#6e7079;-webkit-text-stroke:.1px;">18:02</span>
<div style="left:1423.38px;top:248px;width:2px;height:9.5px;background:#6e7079"></div>
<span class="t sans" style="left:1394.60px;top:245px;font-size:23.8px;color:#6e7079;-webkit-text-stroke:.1px;">18:04</span>
<div style="left:1569.1px;top:248px;width:2px;height:9.5px;background:#6e7079"></div>
<span class="t sans" style="left:1540.32px;top:245px;font-size:23.8px;color:#6e7079;-webkit-text-stroke:.1px;">18:06</span>
<div style="left:1714.82px;top:248px;width:2px;height:9.5px;background:#6e7079"></div>
<span class="t sans" style="left:1686.04px;top:245px;font-size:23.8px;color:#6e7079;-webkit-text-stroke:.1px;">18:08</span>
<div style="left:1860.54px;top:248px;width:2px;height:9.5px;background:#6e7079"></div>
<span class="t sans" style="left:1831.76px;top:245px;font-size:23.8px;color:#6e7079;-webkit-text-stroke:.1px;">18:10</span>
<div style="left:2006.26px;top:248px;width:2px;height:9.5px;background:#6e7079"></div>
<span class="t sans" style="left:1977.48px;top:245px;font-size:23.8px;color:#6e7079;-webkit-text-stroke:.1px;">18:12</span>
<div style="left:2151.98px;top:248px;width:2px;height:9.5px;background:#6e7079"></div>
<span class="t sans" style="left:2123.20px;top:245px;font-size:23.8px;color:#6e7079;-webkit-text-stroke:.1px;">18:14</span>
<span class="t sans" style="left:39.87px;top:69px;font-size:23.6px;color:#6e7079;-webkit-text-stroke:.1px;">1</span>
<span class="t sans" style="left:39.87px;top:143px;font-size:23.6px;color:#6e7079;-webkit-text-stroke:.1px;">1</span>
<span class="t sans" style="left:39.87px;top:217px;font-size:23.6px;color:#6e7079;-webkit-text-stroke:.1px;">0</span>
<div style="left:0px;top:288px;width:2289px;height:46px;background:#f5f5f5"></div>
<span class="t sansb" style="left:15.46px;top:282px;font-size:27.77px;color:#111;">timestamp </span><span class="t sansb" style="left:162.52px;top:282px;font-size:27.77px;color:#111;letter-spacing:-0.147px;">(Asia/Calcutta)</span>
<span class="t sansb" style="left:535.68px;top:282px;font-size:26.04px;color:#111;">source</span>
<svg class="i" style="left:20.04px;top:341.19px;width:27.93px;height:27.93px;" viewBox="0 0 24 24" preserveAspectRatio="none"><path fill="#111" d="M16.59 8.59L12 13.17 7.41 8.59 6 10l6 6 6-6z"/></svg>
<span class="t mono" style="left:74.40px;top:325px;font-size:24px;color:#111;">2025-06-30 18:06:10.641</span>
<span class="t mono" style="left:535.90px;top:325px;font-size:24px;color:#111;">{"_timestamp":1751286970641719,"emails":"[\"simran@gmail.com\",\"someone@example.com\"]","job":"test","level":"info","log_va</span>
<div style="left:0px;top:376px;width:2289px;height:2px;background:#e4e4ea"></div>
<div style="left:34px;top:388px;width:4px;height:4px;background:#8a8a8a;border-radius:50%"></div>
<div style="left:54px;top:388px;width:273px;height:45px;border:2px solid #cfcfcf;border-radius:7px;background:#fff"></div>
<svg class="i" style="left:69.86px;top:398.21px;width:23.97px;height:23.97px;" viewBox="0 0 24 24" preserveAspectRatio="none"><path fill="#222" d="M16 1H4c-1.1 0-2 .9-2 2v14h2V3h12V1zm3 4H8c-1.1 0-2 .9-2 2v14c0 1.1.9 2 2 2h11c1.1 0 2-.9 2-2V7c0-1.1-.9-2-2-2zm0 16H8V7h11v14z"/></svg>
<span class="t mono" style="left:105.40px;top:381px;font-size:20px;color:#111;">Copy to clipboard</span>
<span class="t mono" style="left:33.90px;top:429px;font-size:24px;color:#111;">{</span>
<svg class="i" style="left:55.34px;top:484.05px;width:25.92px;height:25.92px;" viewBox="0 0 24 24" preserveAspectRatio="none"><path fill="#111" d="M7 10l5 5 5-5z"/></svg>
<span class="t mono" style="left:94.00px;top:466px;font-size:24px;color:#a52a2a;">_timestamp:</span>
<span class="t mono" style="left:260.93px;top:466px;font-size:24px;color:#111;">1751286970641719,</span>
<svg class="i" style="left:55.34px;top:522.05px;width:25.92px;height:25.92px;" viewBox="0 0 24 24" preserveAspectRatio="none"><path fill="#111" d="M7 10l5 5 5-5z"/></svg>
<span class="t mono" style="left:94.00px;top:504px;font-size:24px;color:#a52a2a;">emails:</span>
<span class="t mono" style="left:203.14px;top:504px;font-size:24px;color:#111;">["simran@gmail.com","someone@example.com"],</span>
<svg class="i" style="left:55.34px;top:559.05px;width:25.92px;height:25.92px;" viewBox="0 0 24 24" preserveAspectRatio="none"><path fill="#111" d="M7 10l5 5 5-5z"/></svg>
<span class="t mono" style="left:94.00px;top:541px;font-size:24px;color:#a52a2a;">job:</span>
<span class="t mono" style="left:159.79px;top:541px;font-size:24px;color:#111;">test,</span>
<svg class="i" style="left:55.34px;top:597.05px;width:25.92px;height:25.92px;" viewBox="0 0 24 24" preserveAspectRatio="none"><path fill="#111" d="M7 10l5 5 5-5z"/></svg>
<span class="t mono" style="left:94.00px;top:579px;font-size:24px;color:#a52a2a;">level:</span>
<span class="t mono" style="left:188.69px;top:579px;font-size:24px;color:#111;">info,</span>
<svg class="i" style="left:55.34px;top:635.05px;width:25.92px;height:25.92px;" viewBox="0 0 24 24" preserveAspectRatio="none"><path fill="#111" d="M7 10l5 5 5-5z"/></svg>
<span class="t mono" style="left:94.00px;top:617px;font-size:24px;color:#a52a2a;">log_value:</span>
<span class="t mono" style="left:246.48px;top:617px;font-size:24px;color:#111;">test message for openobserve,</span>
<svg class="i" style="left:55.34px;top:673.05px;width:25.92px;height:25.92px;" viewBox="0 0 24 24" preserveAspectRatio="none"><path fill="#111" d="M7 10l5 5 5-5z"/></svg>
<span class="t mono" style="left:94.00px;top:655px;font-size:24px;color:#a52a2a;">more_numbers:</span>
<span class="t mono" style="left:289.82px;top:655px;font-size:24px;color:#111;">[6, 5, 4],</span>
<div style="left:94px;top:703.8px;width:274.512px;height:37.75px;background:#b5d5fc"></div>
<div style="left:376.512px;top:703.8px;width:621.264px;height:37.75px;background:#b5d5fc"></div>
<svg class="i" style="left:55.34px;top:710.05px;width:25.92px;height:25.92px;" viewBox="0 0 24 24" preserveAspectRatio="none"><path fill="#111" d="M7 10l5 5 5-5z"/></svg>
<span class="t mono" style="left:94.00px;top:692px;font-size:24px;color:#a52a2a;">nested_value_manas:</span>
<span class="t mono" style="left:376.51px;top:692px;font-size:24px;color:#111;">{"department":{"btech":{"result":"yes"}}},</span>
<svg class="i" style="left:55.34px;top:748.05px;width:25.92px;height:25.92px;" viewBox="0 0 24 24" preserveAspectRatio="none"><path fill="#111" d="M7 10l5 5 5-5z"/></svg>
<span class="t mono" style="left:94.00px;top:730px;font-size:24px;color:#a52a2a;">numbers:</span>
<span class="t mono" style="left:217.58px;top:730px;font-size:24px;color:#111;">[3, 1, 2],</span>
<svg class="i" style="left:55.34px;top:786.05px;width:25.92px;height:25.92px;" viewBox="0 0 24 24" preserveAspectRatio="none"><path fill="#111" d="M7 10l5 5 5-5z"/></svg>
<span class="t mono" style="left:94.00px;top:768px;font-size:24px;color:#a52a2a;">personal_age:</span>
<span class="t mono" style="left:289.82px;top:768px;font-size:24px;color:#111;">23,</span>
<svg class="i" style="left:55.34px;top:824.05px;width:25.92px;height:25.92px;" viewBox="0 0 24 24" preserveAspectRatio="none"><path fill="#111" d="M7 10l5 5 5-5z"/></svg>
<span class="t mono" style="left:94.00px;top:806px;font-size:24px;color:#a52a2a;">personal_location:</span>
<span class="t mono" style="left:362.06px;top:806px;font-size:24px;color:#111;">delhi,</span>
<svg class="i" style="left:55.34px;top:861.05px;width:25.92px;height:25.92px;" viewBox="0 0 24 24" preserveAspectRatio="none"><path fill="#111" d="M7 10l5 5 5-5z"/></svg>
<span class="t mono" style="left:94.00px;top:843px;font-size:24px;color:#a52a2a;">users:</span>
<span class="t mono" style="left:188.69px;top:843px;font-size:24px;color:#111;">["simran","someone"]</span>
<span class="t mono" style="left:33.90px;top:880px;font-size:24px;color:#111;">}</span>
<div style="left:0px;top:939px;width:2289px;height:2px;background:#e4e4ea"></div>
</main>
<button style="left:702.5px;top:402px;width:58px;height:58px;border-radius:50%;background:#5960b2;border:2px solid #d6d6dc;will-change:transform"><svg class="i" style="left:6.51px;top:5.49px;width:42.11px;height:42.11px;" viewBox="0 0 24 24" preserveAspectRatio="none"><path fill="#fff" d="M15.41 7.41L14 6l-6 6 6 6 1.41-1.41L10.83 12z"/></svg></button>
<div style="left:110px;top:1560px;width:2800px;height:30px;border-radius:30px;box-shadow:0 0 80px 10px rgba(0,0,0,.1);pointer-events:none"></div>
</div>
</body></html>
